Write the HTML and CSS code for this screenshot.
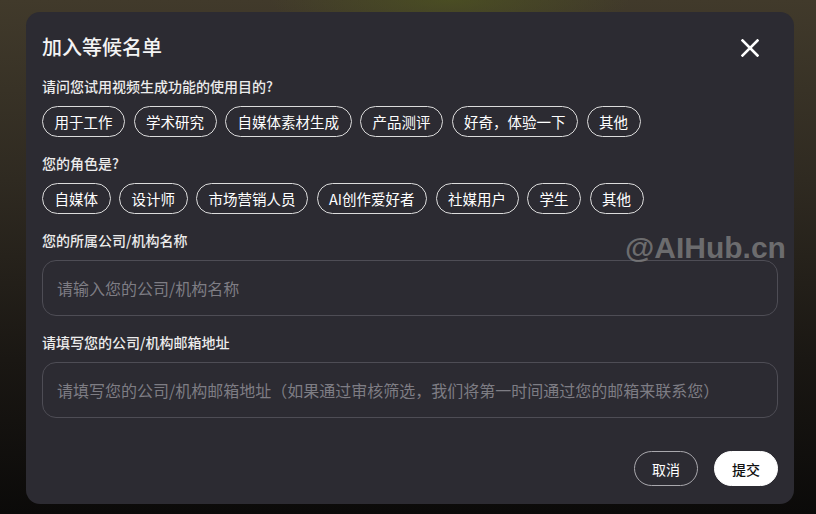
FILE: index.html
```html
<!DOCTYPE html>
<html lang="zh-CN">
<head>
<meta charset="utf-8">
<title>加入等候名单</title>
<link rel="stylesheet" href="styles.css">
</head>
<body>
<div class="modal">
  <div class="header">
    <h1 class="title">加入等候名单</h1>
    <svg class="close" width="18" height="18" viewBox="0 0 18 18"><path d="M1.5 1.5 L16.5 16.5 M16.5 1.5 L1.5 16.5" stroke="#fff" stroke-width="2.6" stroke-linecap="square"/></svg>
  </div>
  <div class="label q1">请问您试用视频生成功能的使用目的?</div>
  <div class="chips">
    <span class="chip">用于工作</span>
    <span class="chip">学术研究</span>
    <span class="chip">自媒体素材生成</span>
    <span class="chip">产品测评</span>
    <span class="chip">好奇，体验一下</span>
    <span class="chip">其他</span>
  </div>
  <div class="label">您的角色是?</div>
  <div class="chips">
    <span class="chip">自媒体</span>
    <span class="chip">设计师</span>
    <span class="chip">市场营销人员</span>
    <span class="chip">AI创作爱好者</span>
    <span class="chip">社媒用户</span>
    <span class="chip">学生</span>
    <span class="chip">其他</span>
  </div>
  <div class="label">您的所属公司/机构名称</div>
  <div class="input">请输入您的公司/机构名称</div>
  <div class="label">请填写您的公司/机构邮箱地址</div>
  <div class="input">请填写您的公司/机构邮箱地址（如果通过审核筛选，我们将第一时间通过您的邮箱来联系您）</div>
  <div class="actions">
    <button class="btn cancel">取消</button>
    <button class="btn submit">提交</button>
  </div>
</div>
<div class="watermark">@AIHub.cn</div>
</body>
</html>
```
FILE: styles.css
```css
html, body {
  margin: 0;
  height: 100%;
}
body {
  position: relative;
  padding: 12px 22px 0 26px;
  box-sizing: border-box;
  background:
    radial-gradient(ellipse 180px 40px at 450px 0, rgba(80, 90, 30, 0.6), rgba(80, 90, 30, 0) 100%),
    linear-gradient(180deg, #413a2b 0%, #2f2a21 35%, #1a1713 70%, #0b0a09 100%);
  font-family: "Noto Sans CJK SC", "Noto Sans", sans-serif;
  color: #fff;
  overflow: hidden;
}
.modal {
  width: 768px;
  box-sizing: border-box;
  background: #2c2b32;
  border-radius: 14px;
  padding: 24px 16px 18px 16px;
}
.header {
  display: flex;
  justify-content: space-between;
  align-items: center;
}
.title {
  margin: 0;
  font-size: 20px;
  line-height: 22px;
  font-weight: 500;
  color: #f4f4f4;
}
.close {
  margin-right: 19px;
  margin-top: 2px;
}
.label {
  font-size: 14px;
  line-height: 20px;
  font-weight: 500;
  color: #ececec;
  margin-top: 16px;
}
.label.q1 {
  margin-top: 18px;
}
.chips {
  display: flex;
  gap: 8.5px;
  margin-top: 10px;
}
.chips + .label {
  margin-top: 16px;
}
.chip {
  border: 1px solid #dcdcdc;
  border-radius: 16px;
  padding: 0 11.5px;
  height: 29px;
  line-height: 29px;
  font-size: 14.5px;
  color: #fff;
  white-space: nowrap;
}
.input {
  margin-top: 10px;
  height: 54px;
  line-height: 54px;
  border: 1px solid #4e4d55;
  border-radius: 14px;
  padding: 0 14px;
  font-size: 16px;
  color: #7e7d84;
  white-space: nowrap;
  overflow: hidden;
}
.input + .label {
  margin-top: 16px;
}
.actions {
  display: flex;
  justify-content: flex-end;
  gap: 16px;
  margin-top: 33px;
}
.btn {
  font-family: "Noto Sans CJK SC", "Noto Sans", sans-serif;
  font-size: 14px;
  height: 35px;
  width: 64px;
  border-radius: 18px;
  padding: 0;
  cursor: pointer;
}
.cancel {
  background: transparent;
  border: 1px solid #a9a8ad;
  color: #fff;
}
.submit {
  background: #fff;
  border: 1px solid #fff;
  color: #111;
  font-weight: 500;
}
.watermark {
  position: absolute;
  left: 625px;
  top: 233px;
  font-family: "Liberation Sans", Arial, sans-serif;
  font-weight: bold;
  font-size: 30px;
  line-height: 30px;
  color: rgba(130, 130, 130, 0.75);
  white-space: nowrap;
}
```
